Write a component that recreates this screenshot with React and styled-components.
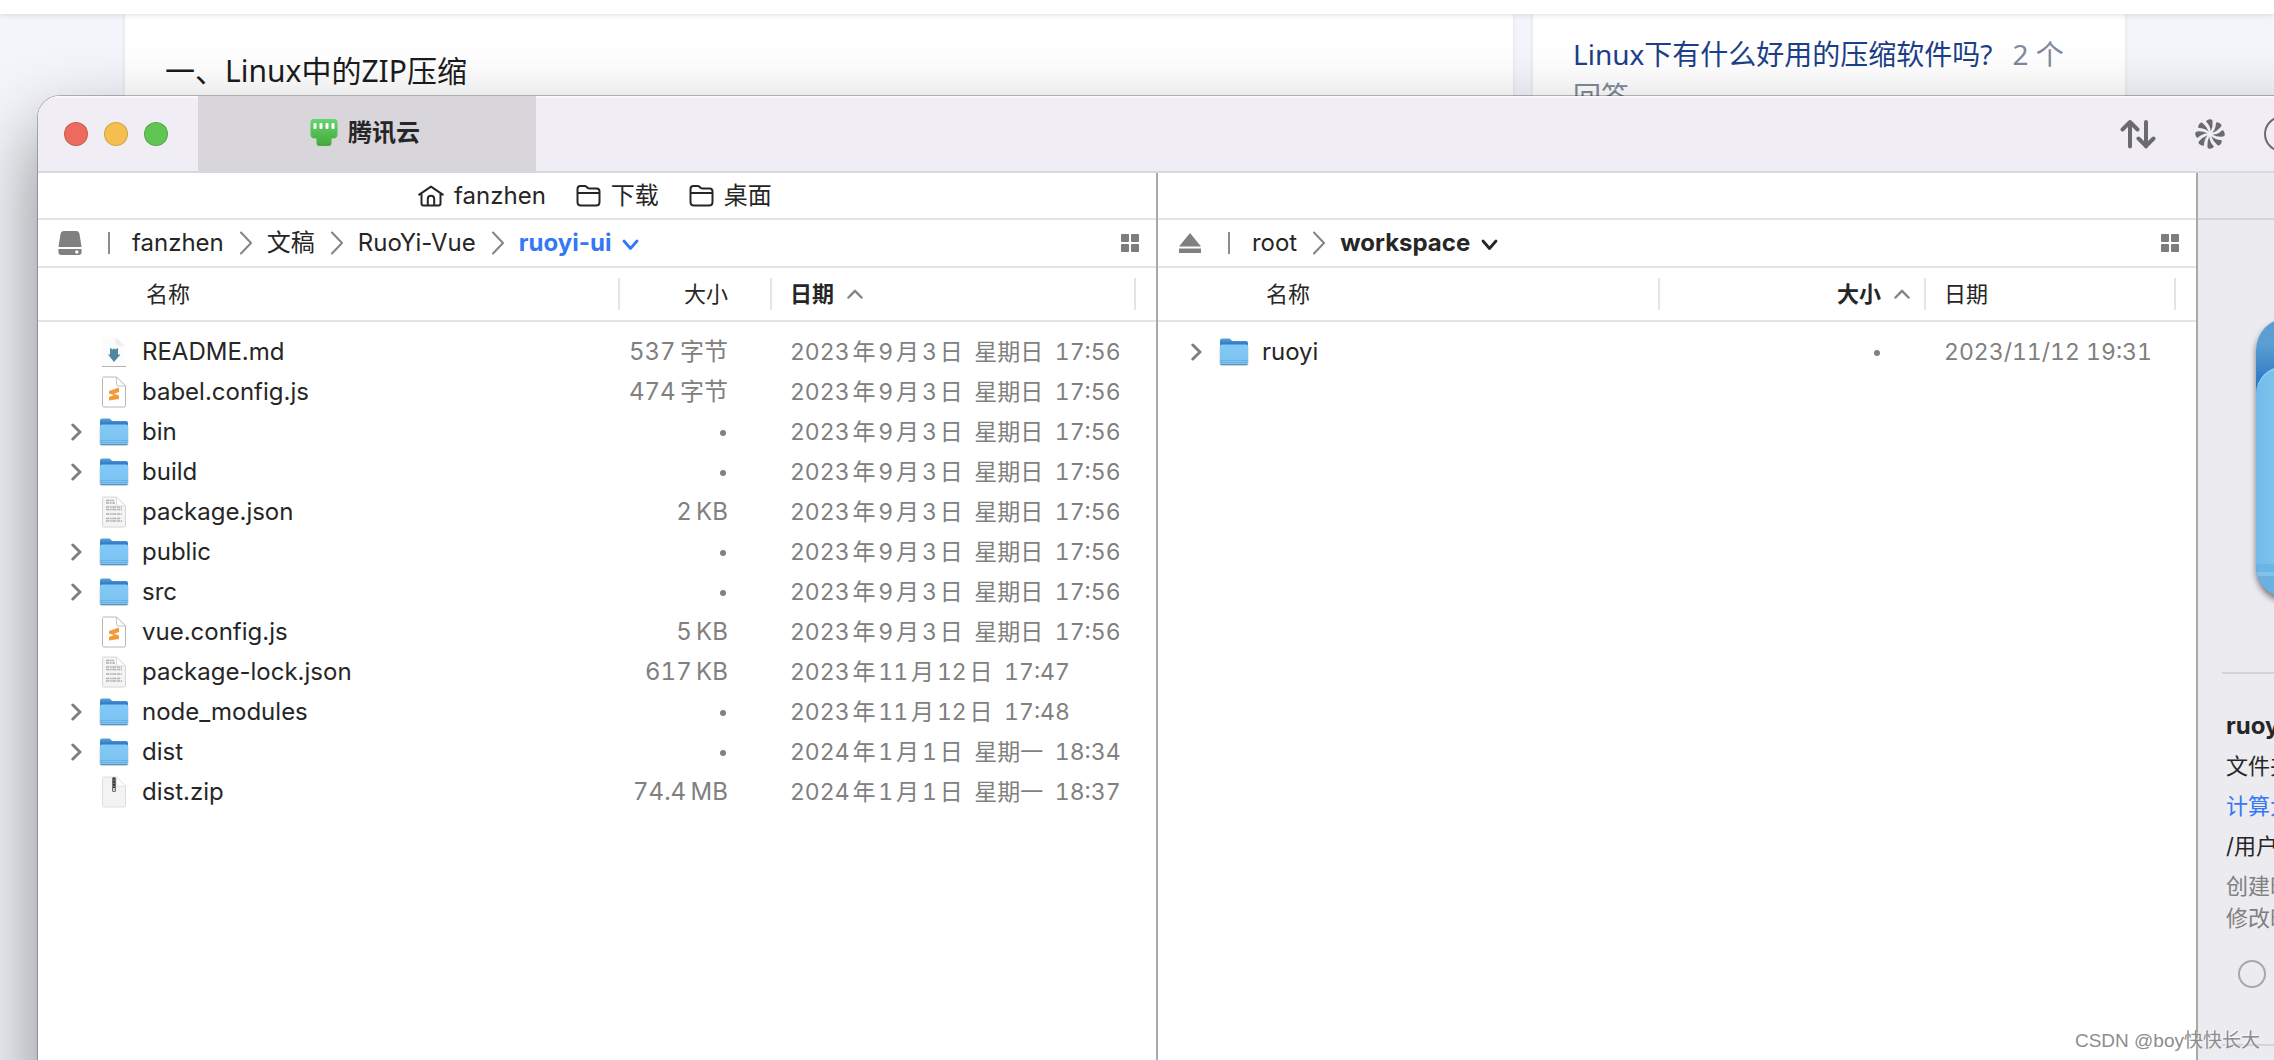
import React from "react";
import styled, { createGlobalStyle, css } from "styled-components";

const UI = `Inter, "Noto Sans CJK SC", sans-serif`;
const WEB = `"Noto Sans", "Noto Sans CJK SC", sans-serif`;

const Global = createGlobalStyle`
  *, *::before, *::after { box-sizing: border-box; }
  html, body { margin: 0; height: 100%; }
  body { background: #f3f5fa; font-family: ${UI}; color: #262626; overflow: hidden; }
  #root { height: 100%; }
  button { font: inherit; color: inherit; background: none; border: 0; padding: 0; cursor: pointer; }
  a { text-decoration: none; color: inherit; }
  h1, h2, p { margin: 0; }
  svg { display: block; flex: none; }
`;

const Screen = styled.div`
  position: relative;
  height: 100%;
  min-height: 100vh;
  overflow: hidden;
`;

/* web page behind the window */
const SiteBar = styled.header`
  height: 14px;
  background: #fff;
  box-shadow: 0 0 6px rgba(0, 0, 0, 0.16);
  position: relative;
`;
const SiteBody = styled.div`
  display: flex;
  gap: 20px;
  height: calc(100vh - 14px);
  padding: 0 149px 0 125px;
  font-family: ${WEB};
`;
const Card = styled.section`
  background: #fff;
  padding: ${(p) => (p.$side ? "19px 40px" : "29px 40px")};
  ${(p) => (p.$side ? css`flex: none; width: 592px;` : css`flex: 1;`)}
  box-shadow: 0 0 4px rgba(30, 30, 70, 0.1);
`;
const ArticleTitle = styled.h2`
  font-size: 30px;
  line-height: 56px;
  font-weight: 400;
  color: #1c1c20;
`;
const Question = styled.p`
  font-size: 28px;
  line-height: 42px;
  color: #808a9c;
  a { color: #1d3f88; margin-right: 20px; }
`;

/* window */
const Window = styled.main`
  position: absolute;
  top: 96px;
  left: 38px;
  right: 0;
  bottom: 0;
  display: flex;
  flex-direction: column;
  background: #fff;
  border-top-left-radius: 22px;
  overflow: hidden;
`;
const WindowShadow = styled.div`
  position: absolute;
  top: 96px;
  left: 38px;
  right: -100px;
  bottom: -200px;
  border-radius: 22px;
  box-shadow: 0 0 0 1px rgba(0, 0, 0, 0.25), 0 36px 76px 4px rgba(0, 0, 0, 0.42);
`;
const TitleBar = styled.header`
  display: flex;
  align-items: stretch;
  height: 77px;
  flex: none;
  background: #f0eef4;
  box-shadow: inset 0 2px 0 #f8f7fa;
  border-bottom: 2px solid #d9d8dc;
`;
const Lights = styled.div`
  display: flex;
  align-items: center;
  gap: 16px;
  width: 160px;
  padding-left: 26px;
`;
const Light = styled.button`
  width: 24px;
  height: 24px;
  border-radius: 50%;
  background: ${(p) => p.$color};
  border: 1px solid rgba(0, 0, 0, 0.14);
`;
const Tab = styled.button`
  display: flex;
  align-items: center;
  justify-content: center;
  gap: 10px;
  width: 338px;
  padding: 0 4px 2px 0;
  background: #d8d6db;
  font-size: 24px;
  line-height: 28px;
  font-weight: 700;
`;
const Tools = styled.div`
  display: flex;
  align-items: center;
  gap: 38px;
  margin-left: auto;
  margin-right: -26px;
  color: #6b6a6e;
`;

const Columns = styled.div`
  flex: 1;
  display: flex;
  min-height: 0;
`;
const Pane = styled.section`
  display: flex;
  flex-direction: column;
  ${(p) => (p.$wide ? css`flex: 1120 1 0;` : css`flex: 1040 1 0;`)}
  min-width: 0;
  border-right: 2px solid #a9a9ab;
`;
const Favorites = styled.nav`
  display: flex;
  align-items: center;
  justify-content: center;
  gap: 30px;
  height: 47px;
  padding-right: 4px;
  border-bottom: 2px solid #e4e4e4;
`;
const Favorite = styled.a`
  display: flex;
  align-items: center;
  gap: 10px;
  font-size: 24px;
  line-height: 30px;
`;
const PathBar = styled.nav`
  display: flex;
  align-items: center;
  height: 48px;
  padding: 0 17px 1px 18px;
  border-bottom: 2px solid #e4e4e4;
  font-size: 24px;
  line-height: 30px;
  color: #262626;
`;
const Device = styled.button`
  display: flex;
  justify-content: center;
  width: 28px;
  color: #808080;
`;
const Rule = styled.i`
  width: 2px;
  height: 22px;
  margin: 0 22px 0 24px;
  background: #8c8c8c;
`;
const Crumb = styled.a`
  display: flex;
  align-items: center;
`;
const Here = styled.button`
  display: flex;
  align-items: center;
  gap: 11px;
  font-weight: 700;
  color: ${(p) => (p.$active ? "#3478f6" : "#262626")};
  svg { margin-top: 4px; }
`;
const Sep = styled.span`
  display: flex;
  margin: 0 15px 0 16px;
  color: #858585;
`;
const ViewMode = styled.button`
  margin-left: auto;
  color: #7d7d7d;
`;

const Table = styled.table`
  width: 100%;
  table-layout: fixed;
  border-collapse: collapse;
  font-size: 24px;
  line-height: 30px;
  text-autospace: normal;
`;
const Head = styled.tr`
  height: 53px;
  border-bottom: 2px solid #e4e4e4;
  font-size: 22px;
`;
const HeadCell = styled.th`
  padding: 0;
  font-weight: ${(p) => (p.$sorted ? 700 : 400)};
`;
const HeadLabel = styled.button`
  display: flex;
  align-items: center;
  gap: 13px;
  width: 100%;
  height: 32px;
  justify-content: ${(p) => (p.$right ? "flex-end" : "flex-start")};
  padding: ${(p) => p.$pad};
  border-right: 2px solid #e4e4e4;
`;
const Spacer = styled.tr`
  height: 11px;
`;
const Row = styled.tr`
  height: 40px;
`;
const Cell = styled.td`
  padding: ${(p) => p.$pad || "0"};
  text-align: ${(p) => (p.$right ? "right" : "left")};
  color: #262626;
  white-space: nowrap;
`;
const MetaCell = styled(Cell)`
  color: #808080;
  font-variant-numeric: tabular-nums;
`;
const DateCell = styled(MetaCell)`
  font-size: 23px;
`;
const FileName = styled.span`
  display: flex;
  align-items: center;
`;
const Toggle = styled.button`
  width: 10px;
  height: 18px;
  margin: 0 18px 0 33px;
  color: #808080;
`;
const IconSlot = styled.span`
  display: flex;
  justify-content: center;
  width: 30px;
  margin-right: 13px;
`;
const Dot = styled.i`
  display: inline-block;
  width: 6px;
  height: 6px;
  margin-right: 2px;
  border-radius: 50%;
  background: #808080;
  vertical-align: middle;
`;

const Inspector = styled.aside`
  width: 76px;
  flex: none;
  background: #ecebf0;
  overflow: hidden;
`;
const InspectorTop = styled.div`
  height: 47px;
  border-bottom: 2px solid #d4d3d8;
`;
const Preview = styled.div`
  height: 454px;
  margin-left: 24px;
  padding: 98px 0 0 34px;
  border-bottom: 2px solid #d4d3d8;
`;
const BigFolder = styled.div`
  width: 330px;
  height: 280px;
  border-radius: 32px;
  padding-top: 48px;
  background: linear-gradient(#5a9ed2 26px, #2b78c4 66px);
  box-shadow: 0 4px 6px rgba(0, 0, 0, 0.5);
  &::before {
    content: "";
    display: block;
    height: 232px;
    border-radius: 28px 28px 32px 32px;
    background: linear-gradient(transparent 198px, #6cb4e4 198px, #6cb4e4 206px, #7fc2ef 206px, #7fc2ef 210px, #6ab1e2 210px),
      linear-gradient(90deg, #73bbea, #86caf4 40px);
    box-shadow: inset 0 2px 0 #93cdf2;
  }
`;
const Info = styled.div`
  padding: 32px 0 0 28px;
  white-space: nowrap;
  font-size: 22px;
  line-height: 40px;
`;
const InfoTitle = styled.h1`
  font-size: 24px;
  line-height: 40px;
`;
const InfoLink = styled.button`
  display: block;
  color: #3478f6;
  line-height: 40px;
`;
const Dates = styled.div`
  padding-top: 4px;
  line-height: 32px;
  color: #808080;
`;
const Radio = styled.input`
  appearance: none;
  display: block;
  width: 28px;
  height: 28px;
  margin: 26px 0 0 12px;
  border: 2px solid #a8a8ac;
  border-radius: 50%;
`;
const InfoEnd = styled.hr`
  height: 2px;
  margin: 56px 0 0 -4px;
  border: 0;
  background: #d4d3d8;
`;
const Watermark = styled.div`
  position: absolute;
  right: 14px;
  bottom: 4px;
  font-size: 19px;
  line-height: 30px;
  font-family: "Liberation Sans", "Noto Sans CJK SC", sans-serif;
  color: #8d8d8d;
  text-shadow: -1px -1px 0 rgba(255, 255, 255, 0.8);
`;

const stroke = { fill: "none", stroke: "currentColor", strokeLinecap: "round", strokeLinejoin: "round" };

const HomeIcon = () => (
  <svg width="26" height="22" viewBox="0 0 26 22" {...stroke} strokeWidth="2">
    <path d="M1.2 9.6 13 1.6l11.800 8M3.500 8.500v10q0 2 2 2h15q2 0 2-2v-10M9.800 20v-6q0-3.200 3.200-3.200t3.200 3.200v6" />
  </svg>
);
const FolderIcon = () => (
  <svg width="25" height="22" viewBox="0 0 25 22" {...stroke} strokeWidth="2">
    <path d="M1.500 17V4q0-3 3-3h4q1.200 0 2 .8l1 1q.8.700 2 .7h7q3 0 3 3V17q0 3.500-3.500 3.500H5Q1.500 20.500 1.500 17zM1.500 8h22" />
  </svg>
);
const ChevronRight = () => (
  <svg width="12" height="24" viewBox="0 0 12 24" {...stroke} strokeWidth="2">
    <path d="M1 1.500 11 12 1 22.500" />
  </svg>
);
const ChevronDown = () => (
  <svg width="17" height="12" viewBox="0 0 17 12" {...stroke} strokeWidth="2.800">
    <path d="M2 2 8.500 9.500 15 2" />
  </svg>
);
const SortUp = () => (
  <svg width="16" height="10" viewBox="0 0 16 10" {...stroke} stroke="#858585" strokeWidth="2.500">
    <path d="M1.500 8.500 8 1.800l6.500 6.700" />
  </svg>
);
const ToggleIcon = () => (
  <svg width="11" height="18" viewBox="0 0 11 18" {...stroke} strokeWidth="3">
    <path d="M1.800 2 9 9l-7.200 7" />
  </svg>
);
const DiskIcon = () => (
  <svg width="24" height="24" viewBox="0 0 24 24" fill="currentColor">
    <path d="M5.500 0h13q2.500 0 2.900 2.500L23.600 16H.4L2.600 2.500Q3 0 5.500 0z" />
    <path d="M.4 18h23.200v3q0 3-3 3H3.400q-3 0-3-3z" />
    <circle cx="18.800" cy="21" r="1.700" fill="#fff" />
  </svg>
);
const EjectIcon = () => (
  <svg width="24" height="20" viewBox="0 0 24 20" fill="currentColor">
    <path d="M12 0 23 13.500H1zM1 15.500h22V20H1z" />
  </svg>
);
const GridIcon = () => (
  <svg width="18" height="18" viewBox="0 0 18 18" fill="currentColor">
    <rect width="8" height="8" rx="1" /><rect x="10" width="8" height="8" rx="1" />
    <rect y="10" width="8" height="8" rx="1" /><rect x="10" y="10" width="8" height="8" rx="1" />
  </svg>
);
const PortIcon = () => (
  <svg width="28" height="28" viewBox="0 0 28 28">
    <defs><linearGradient id="port" x2="0" y2="1"><stop stopColor="#65d46e" /><stop offset="1" stopColor="#43a939" /></linearGradient></defs>
    <path fill="url(#port)" d="M3.500 0h20.500q3.500 0 3.500 3.500V15q0 4.500-4.500 4.500h-1.500V24q0 3-3 3H9.500q-3 0-3-3v-4.500H5Q.5 19.500.5 15V3.500Q.5 0 3.500 0z" />
    <g fill="#fff"><rect x="3.500" y="4" width="3" height="6" rx="1" /><rect x="9.500" y="4" width="3" height="6" rx="1" /><rect x="15.500" y="4" width="3" height="6" rx="1" /><rect x="21.500" y="4" width="3" height="6" rx="1" /></g>
  </svg>
);
const TransferIcon = () => (
  <svg width="36" height="30" viewBox="0 0 36 30" {...stroke} strokeWidth="4">
    <path d="M10 27.500V3M2.500 10.500 10 3l7.500 7.500M26 3v24.500M18.500 19.500l7.500 7.500 7.500-7.500" />
  </svg>
);
const FanIcon = () => (
  <svg width="32" height="32" viewBox="-16 -16 32 32" fill="currentColor">
    {[0, 45, 90, 135, 180, 225, 270, 315].map((a) => (
      <path key={a} transform={`rotate(${a})`} d="M.8-2.500Q.2-8.500-3.800-12.200-3.600-14.400.5-14.800 2.400-14.800 2.600-13 3-7 .8-2.500z" />
    ))}
  </svg>
);
const CircleIcon = () => (
  <svg width="36" height="36" viewBox="0 0 36 36" {...stroke} strokeWidth="2"><circle cx="18" cy="18" r="17" /></svg>
);

const FolderFile = () => (
  <svg width="30" height="30" viewBox="0 0 30 30">
    <defs>
      <linearGradient id="fback" x2="0" y2="1"><stop stopColor="#5aa3d8" /><stop offset=".6" stopColor="#2f7cc8" /></linearGradient>
      <linearGradient id="ffront" x2="0" y2="1"><stop stopColor="#83c9f7" /><stop offset="1" stopColor="#7ac2f0" /></linearGradient>
    </defs>
    <rect x=".5" y="8" width="29" height="21" rx="2" fill="#000" opacity=".18" />
    <path fill="url(#fback)" d="M1 3.500q0-2 2-2h6.500q1.500 0 2.500 1.200L13.200 4H27q2 0 2 2v4H1z" />
    <path fill="url(#ffront)" d="M1 9q0-1.500 1.500-1.500h25Q29 7.500 29 9v17q0 2-2 2H3q-2 0-2-2z" />
    <path d="M1 23.500h28M1 25.500h28" stroke="#64aee0" strokeWidth=".8" />
    <path d="M1.800 27.500h26.400" stroke="#4f97cd" strokeWidth="1" />
  </svg>
);
const Page = ({ fill = "#fff", line = "#b8b8b8", children }) => (
  <svg width="26" height="32" viewBox="0 0 26 32">
    <path d="M2.500 1h13L24.500 10v19.500q0 1.500-1.500 1.500H3q-1.500 0-1.500-1.500V2.500Q1.500 1 2.500 1z" fill={fill} stroke={line} />
    {children}
    <path d="M15.500 1v7q0 2 2 2h7z" fill="#fff" stroke={line} strokeWidth=".8" />
  </svg>
);
const MarkdownFile = () => (
  <svg width="26" height="32" viewBox="0 0 26 32">
    <path d="M1.500 1h13l9.500 9v20H1.500z" fill="#fcfcfc" />
    <path d="M14.500 1v6q0 3 3 3H24z" fill="#efefef" />
    <path d="M1 30.500h24" stroke="#b5b5b5" />
    <path d="M9 12l3 1.500L13 12l1 1.500L17 12v6.500h2.500L13 26l-6-7.500h2z" fill="#4f86a0" />
  </svg>
);
const SublimeFile = () => (
  <Page>
    <path d="M8 15l10-3.500v4.500l-5 1.800 5 1.700v3.500L8 24.500V21l5-2-5-1.500z" fill="#f29a38" />
  </Page>
);
const TextFile = () => (
  <Page fill="#f4f4f4" line="#d6d6d6">
    <path d="M5 4.500h8M5 7h9M5 11h16M5 13.500h16M5 18h16M5 22.500h15M5 25h16" stroke="#b0b0b0" strokeDasharray="3 .7 2 .6 4 .8" strokeWidth="1.300" />
  </Page>
);
const ZipFile = () => (
  <Page fill="#f3f3f3" line="#dedede">
    <rect x="11" y="1" width="4" height="15" rx="1.500" fill="#6b747b" />
    <path d="M13 2v10" stroke="#2f363b" strokeDasharray="1.500 1.500" strokeWidth="2" />
    <rect x="12" y="12" width="2" height="3" fill="#c6ccd0" />
  </Page>
);
const icons = { folder: FolderFile, md: MarkdownFile, js: SublimeFile, text: TextFile, zip: ZipFile };

const CHECKOUT = "2023年9月3日 星期日 17:56";
const local = [
  ["md", "README.md", "537 字节", CHECKOUT],
  ["js", "babel.config.js", "474 字节", CHECKOUT],
  ["folder", "bin", null, CHECKOUT],
  ["folder", "build", null, CHECKOUT],
  ["text", "package.json", "2 KB", CHECKOUT],
  ["folder", "public", null, CHECKOUT],
  ["folder", "src", null, CHECKOUT],
  ["js", "vue.config.js", "5 KB", CHECKOUT],
  ["text", "package-lock.json", "617 KB", "2023年11月12日 17:47"],
  ["folder", "node_modules", null, "2023年11月12日 17:48"],
  ["folder", "dist", null, "2024年1月1日 星期一 18:34"],
  ["zip", "dist.zip", "74.4 MB", "2024年1月1日 星期一 18:37"],
];
const remote = [["folder", "ruoyi", null, "2023/11/12 19:31"]];

// sizes use a thin space before the unit; long dates use an en space between parts
const formatSize = (text) => text.replace(" ", "\u2009");
const formatDate = (text) => (text.includes("年") ? text.replace(/ /g, "\u2002") : text);

function FileTable({ rows, sort, widths }) {
  const sizePad = sort === "size" ? "0 14px 0 0" : "0 42px 0 0";
  return (
    <Table>
      <colgroup>
        <col />
        <col width={widths[0]} />
        <col width={widths[1]} />
        <col width="20" />
      </colgroup>
      <thead>
        <Head>
          <HeadCell><HeadLabel $pad="0 0 0 108px">名称</HeadLabel></HeadCell>
          <HeadCell $sorted={sort === "size"}>
            <HeadLabel $right $pad={sizePad}>大小{sort === "size" && <SortUp />}</HeadLabel>
          </HeadCell>
          <HeadCell $sorted={sort === "date"}>
            <HeadLabel $pad="0 0 0 18px">日期{sort === "date" && <SortUp />}</HeadLabel>
          </HeadCell>
          <HeadCell />
        </Head>
      </thead>
      <tbody>
        <Spacer />
        {rows.map(([kind, name, size, date]) => {
          const Icon = icons[kind];
          return (
            <Row key={name}>
              <Cell>
                <FileName>
                  <Toggle as={kind === "folder" ? "button" : "span"} aria-label={kind === "folder" ? name : undefined}>
                    {kind === "folder" && <ToggleIcon />}
                  </Toggle>
                  <IconSlot><Icon /></IconSlot>
                  {name}
                </FileName>
              </Cell>
              <MetaCell $right $pad="0 44px 0 0">{size ? formatSize(size) : <Dot />}</MetaCell>
              <DateCell $pad="0 0 0 18px" colSpan={2}>{formatDate(date)}</DateCell>
            </Row>
          );
        })}
      </tbody>
    </Table>
  );
}

const Path = ({ device, crumbs, here, active }) => (
  <PathBar>
    <Device aria-label="device">{device}</Device>
    <Rule />
    {crumbs.map((c) => (
      <React.Fragment key={c}>
        <Crumb href="#">{c}</Crumb>
        <Sep><ChevronRight /></Sep>
      </React.Fragment>
    ))}
    <Here $active={active}>{here}<ChevronDown /></Here>
    <ViewMode aria-label="view"><GridIcon /></ViewMode>
  </PathBar>
);

export default function App() {
  return (
    <Screen>
      <Global />
      <SiteBar />
      <SiteBody>
        <Card><ArticleTitle>一、Linux中的ZIP压缩</ArticleTitle></Card>
        <Card $side>
          <Question><a href="#">Linux下有什么好用的压缩软件吗?</a>2 个<br />回答</Question>
        </Card>
      </SiteBody>
      <WindowShadow />
      <Window>
        <TitleBar>
          <Lights>
            <Light $color="#ec6a5e" aria-label="close" />
            <Light $color="#f4bf4f" aria-label="minimize" />
            <Light $color="#61c554" aria-label="zoom" />
          </Lights>
          <Tab><PortIcon />腾讯云</Tab>
          <Tools>
            <button aria-label="transfers"><TransferIcon /></button>
            <button aria-label="activity"><FanIcon /></button>
            <button aria-label="info"><CircleIcon /></button>
          </Tools>
        </TitleBar>
        <Columns>
          <Pane $wide>
            <Favorites>
              <Favorite href="#"><HomeIcon />fanzhen</Favorite>
              <Favorite href="#"><FolderIcon />下载</Favorite>
              <Favorite href="#"><FolderIcon />桌面</Favorite>
            </Favorites>
            <Path device={<DiskIcon />} crumbs={["fanzhen", "文稿", "RuoYi-Vue"]} here="ruoyi-ui" active />
            <FileTable rows={local} sort="date" widths={[152, 364]} />
          </Pane>
          <Pane>
            <Favorites />
            <Path device={<EjectIcon />} crumbs={["root"]} here="workspace" />
            <FileTable rows={remote} sort="size" widths={[266, 250]} />
          </Pane>
          <Inspector>
            <InspectorTop />
            <Preview><BigFolder /></Preview>
            <Info>
              <InfoTitle>ruoyi-ui</InfoTitle>
              <p>文件夹</p>
              <InfoLink>计算大小</InfoLink>
              <p>/用户</p>
              <Dates><p>创建时间</p><p>修改时间</p></Dates>
              <Radio type="radio" aria-label="option" />
              <InfoEnd />
            </Info>
          </Inspector>
        </Columns>
      </Window>
      <Watermark>CSDN @boy快快长大</Watermark>
    </Screen>
  );
}
